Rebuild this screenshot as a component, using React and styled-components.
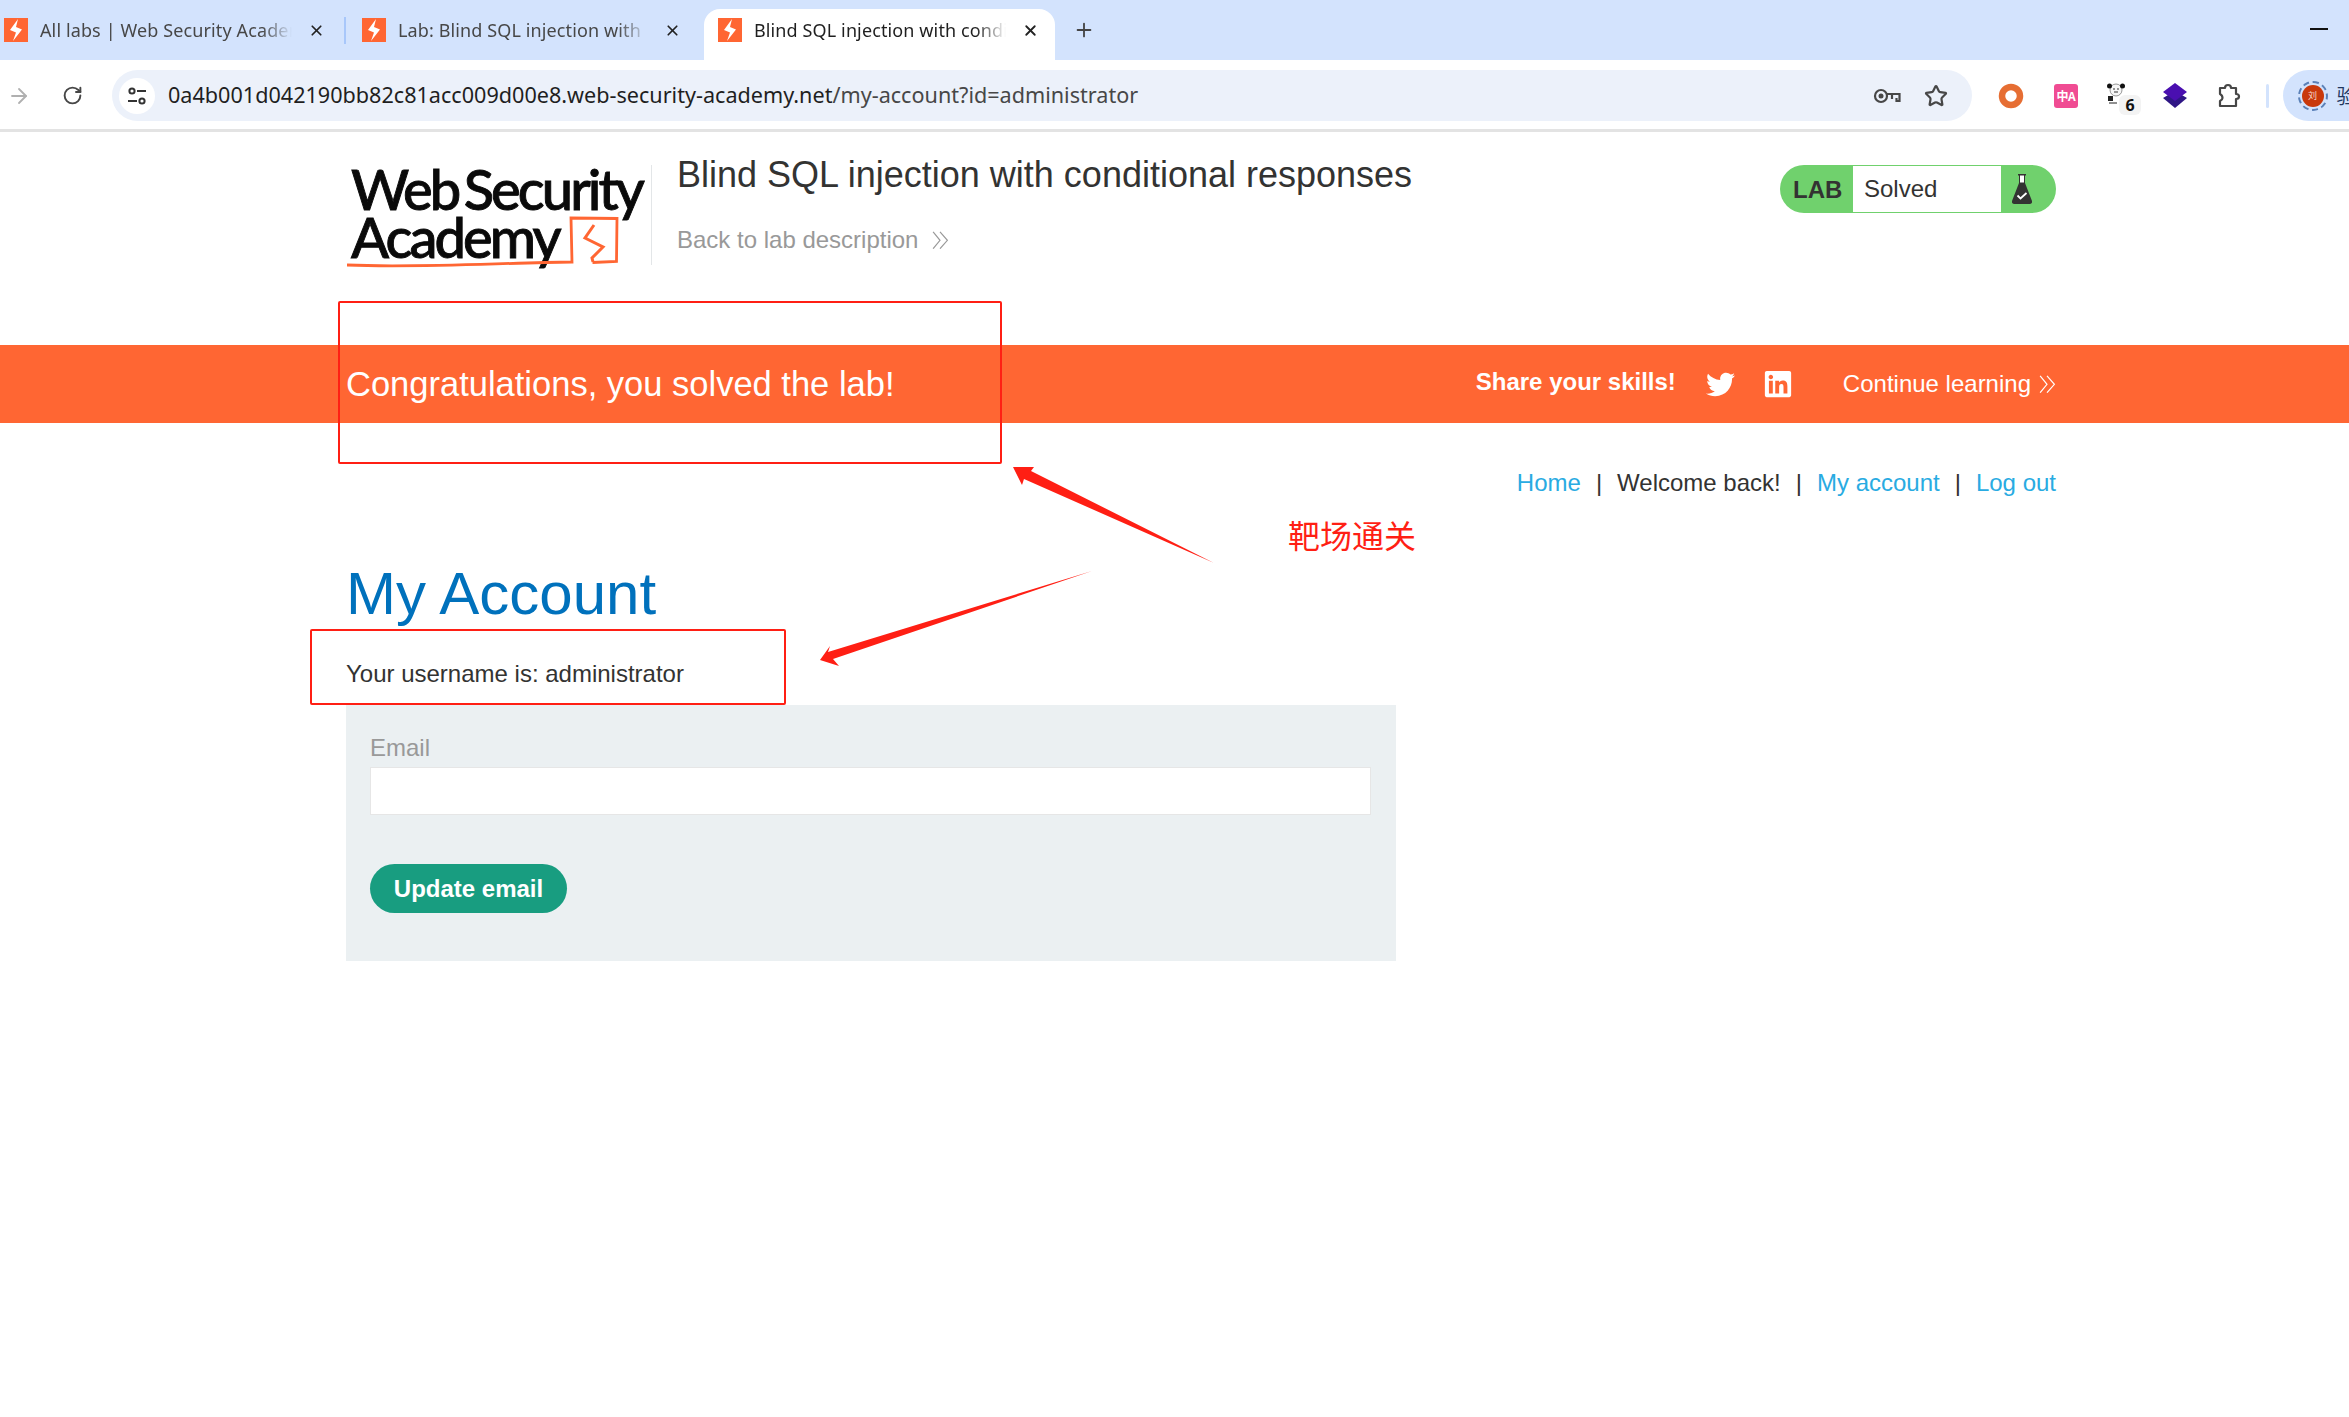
import styled, { createGlobalStyle } from "styled-components";
import { ArrowRight, RotateCw, Star, X, Plus } from "lucide-react";
import { FaTwitter, FaLinkedin } from "react-icons/fa";

const GlobalStyle = createGlobalStyle`
  html, body {
    margin: 0;
    padding: 0;
    background: #fff;
    overflow: hidden;
  }

  * {
    box-sizing: border-box;
  }
`;

const Page = styled.div`
  position: relative;
  width: 2349px;
  height: 1417px;
  overflow: hidden;
  font-family: "Liberation Sans", Arial, sans-serif;
  color: #333332;
`;

/* browser chrome */
const TabStrip = styled.div`
  display: flex;
  align-items: flex-end;
  height: 60px;
  background: #d3e3fd;
`;

const Tab = styled.div`
  display: flex;
  align-items: center;
  flex: none;
  width: ${(p) => p.$width}px;
  height: 51px;
  margin-left: ${(p) => p.$offset || 0}px;
  padding: 0 ${(p) => p.$right}px 9px ${(p) => p.$left}px;
  background: ${(p) => (p.$active ? "#fff" : "transparent")};
  border-radius: 16px 16px 0 0;
  font-family: "Noto Sans", sans-serif;
  font-size: 18px;
  letter-spacing: 0.12px;
  color: ${(p) => (p.$active ? "#1f1f1f" : "#474747")};
`;

const TabTitle = styled.span`
  flex: 1;
  min-width: 0;
  margin-left: 12px;
  overflow: hidden;
  white-space: nowrap;
  -webkit-mask-image: linear-gradient(to right, #000 88%, transparent 100%);
  mask-image: linear-gradient(to right, #000 88%, transparent 100%);
`;

const TabClose = styled(X)`
  flex: none;
  margin-left: 16px;
  color: #222;
`;

const TabDivider = styled.div`
  flex: none;
  width: 2px;
  height: 27px;
  margin-bottom: 16px;
  background: #a8c7fa;
`;

const NewTab = styled(Plus)`
  flex: none;
  align-self: center;
  margin-left: 18px;
  color: #444;
`;

const Minimize = styled.div`
  width: 18px;
  height: 2px;
  margin: 0 21px 30px auto;
  background: #111;
`;

const Toolbar = styled.div`
  display: flex;
  align-items: center;
  height: 72px;
  padding: 2px 0 0 5px;
  background: #fff;
  border-bottom: 3px solid #e3e3e3;
`;

const NavButton = styled.div`
  display: flex;
  align-items: center;
  justify-content: center;
  flex: none;
  width: ${(p) => p.$width}px;
  color: ${(p) => p.$color};
`;

const AddressBar = styled.div`
  display: flex;
  align-items: center;
  flex: none;
  width: 1860px;
  height: 51px;
  padding: 0 12px 0 7px;
  border-radius: 26px;
  background: #ecf1fa;
`;

const SiteInfo = styled.div`
  display: flex;
  align-items: center;
  justify-content: center;
  flex: none;
  width: 36px;
  height: 36px;
  border-radius: 50%;
  background: #fff;
`;

const Url = styled.div`
  flex: 1;
  margin: 0 0 3px 13px;
  font-family: "Noto Sans", sans-serif;
  font-size: 21.6px;
  color: #474747;
  white-space: nowrap;

  b {
    font-weight: 400;
    color: #1f1f1f;
  }
`;

const BarIcon = styled.div`
  display: flex;
  align-items: center;
  justify-content: center;
  flex: none;
  width: 49px;
  color: #474747;
`;

const Extensions = styled.div`
  display: flex;
  flex: none;
  margin-left: 12px;
`;

const Extension = styled.div`
  position: relative;
  display: flex;
  align-items: center;
  justify-content: center;
  width: 54.5px;
  height: 36px;
`;

const CountBadge = styled.span`
  position: absolute;
  left: 26px;
  top: 17px;
  width: 22px;
  height: 20px;
  border-radius: 6px;
  background: #f3f3f3;
  font-family: "Noto Sans", sans-serif;
  font-size: 16px;
  font-weight: 700;
  line-height: 20px;
  text-align: center;
  color: #111;
`;

const TranslateTile = styled.div`
  display: flex;
  align-items: center;
  justify-content: center;
  width: 24px;
  height: 24px;
  border-radius: 3px;
  background: #f04c93;
  color: #fff;
  font-family: "Noto Sans CJK SC", sans-serif;
  font-size: 12px;
  font-weight: 700;
  letter-spacing: -0.5px;
`;

const ToolbarRule = styled.div`
  flex: none;
  width: 3px;
  height: 24px;
  margin-left: 9px;
  border-radius: 2px;
  background: #d3e3fd;
`;

const Profile = styled.div`
  display: flex;
  align-items: center;
  flex: 1;
  height: 51px;
  margin-left: 14px;
  padding-left: 15px;
  border-radius: 26px 0 0 26px;
  background: #d3e3fd;
  font-family: "Noto Sans CJK SC", sans-serif;
  font-size: 20px;
  color: #1f3760;
  white-space: nowrap;
  overflow: hidden;
`;

const AvatarRing = styled.div`
  display: flex;
  align-items: center;
  justify-content: center;
  flex: none;
  width: 30px;
  height: 30px;
  margin-right: 9px;
  border: 2px dashed #5b81b8;
  border-radius: 50%;
`;

const Avatar = styled.div`
  width: 22px;
  height: 22px;
  border-radius: 50%;
  background: #c9390c;
  color: #f6d9cc;
  font-size: 9px;
  line-height: 22px;
  text-align: center;
`;

/* lab page */
const Content = styled.div`
  padding: 0 293px 0 346px;
`;

const Header = styled(Content)`
  display: flex;
  align-items: flex-start;
  height: 213px;
  padding-top: 33px;
`;

const Logo = styled.div`
  position: relative;
  flex: none;
  width: 306px;
  height: 100px;
  border-right: 1px solid #e3e6e8;
  font-family: Lato, sans-serif;
  font-weight: 500;
  font-size: 56px;
  line-height: 48px;
  letter-spacing: -2.9px;
  word-spacing: -6px;
  color: #0a0a0a;
  -webkit-text-stroke: 0.9px #0a0a0a;
  white-space: nowrap;
`;

const LogoLine = styled.div`
  margin-left: 5px;
`;

const LogoMark = styled.svg`
  position: absolute;
  left: 0;
  top: 50px;
  width: 280px;
  height: 70px;
`;

const LabTitle = styled.div`
  flex: 1;
  margin-left: 25px;
  margin-top: -15px;
`;

const LabHeading = styled.h2`
  margin: 0;
  font-size: 36px;
  font-weight: 400;
  line-height: 50px;
  color: #333332;
`;

const BackLink = styled.div`
  display: flex;
  align-items: center;
  margin-top: 22px;
  font-size: 24px;
  line-height: 36px;
  color: #999;
`;

const Chevrons = styled.svg`
  flex: none;
  margin-left: ${(p) => p.$gap}px;
`;

const StatusPill = styled.div`
  display: flex;
  align-items: stretch;
  flex: none;
  width: 276px;
  height: 48px;
  border-radius: 24px;
  background: #70d16d;
`;

const StatusLab = styled.div`
  width: 73px;
  padding-left: 13px;
  font-size: 24px;
  font-weight: 700;
  line-height: 50px;
`;

const StatusValue = styled.div`
  width: 148px;
  margin: 1px 0;
  padding-left: 11px;
  background: #fff;
  font-size: 24px;
  line-height: 46px;
`;

const StatusIcon = styled.div`
  display: flex;
  align-items: center;
  padding-left: 11px;
`;

const Banner = styled(Content)`
  display: flex;
  align-items: center;
  height: 78px;
  background: #ff6633;
  color: #fff;
`;

const BannerTitle = styled.h4`
  flex: 1;
  margin: 0;
  font-size: 34.5px;
  font-weight: 400;
`;

const ShareLabel = styled.span`
  margin-bottom: 4px;
  font-size: 24px;
  font-weight: 700;
`;

const ShareIcon = styled.span`
  display: flex;
  margin-left: ${(p) => p.$gap}px;
`;

const ContinueLink = styled.span`
  margin-left: 50px;
  font-size: 24px;
`;

const TopLinks = styled(Content)`
  display: flex;
  justify-content: flex-end;
  margin-top: 42px;
  font-size: 24px;
  line-height: 36px;
`;

const TopLink = styled.span`
  color: #29abe2;
`;

const Pipe = styled.span`
  margin: 0 15px;
`;

const AccountHeading = styled.h1`
  margin: 57px 0 0;
  font-size: 60px;
  font-weight: 400;
  line-height: 72px;
  color: #0071bc;
`;

const UserLine = styled.p`
  margin: 26px 0 13px;
  font-size: 24px;
  line-height: 36px;
`;

const EmailForm = styled.form`
  width: 1050px;
  height: 256px;
  padding: 25px 24px 0;
  background: #ebf0f2;
`;

const FieldLabel = styled.label`
  display: block;
  font-size: 24px;
  line-height: 36px;
  color: #999;
`;

const EmailInput = styled.input`
  display: block;
  width: 1001px;
  height: 48px;
  margin-top: 1px;
  border: 1px solid #e6e6e6;
  border-radius: 0;
  background: #fff;
`;

const UpdateButton = styled.button`
  display: block;
  width: 197px;
  height: 49px;
  margin-top: 49px;
  padding: 0;
  border: 0;
  border-radius: 25px;
  background: #189d80;
  color: #fff;
  font-family: "Liberation Sans", Arial, sans-serif;
  font-size: 24px;
  font-weight: 700;
`;

/* red markup drawn on top of the screenshot */
const Markup = styled.svg`
  position: absolute;
  left: 0;
  top: 0;
  pointer-events: none;
`;

const MarkupNote = styled.div`
  position: absolute;
  left: 1288px;
  top: 511px;
  font-family: "Noto Sans CJK SC", sans-serif;
  font-size: 32px;
  line-height: 46px;
  color: #ff1f14;
`;

function Favicon() {
  return (
    <svg width="24" height="24" viewBox="0 0 24 24" style={{ flex: "none" }}>
      <rect width="24" height="24" fill="#ff6633" />
      <path d="M14 1 6 12l6 2.500L9 23l9-11.500-6-2.500z" fill="#fff" />
    </svg>
  );
}

function DoubleChevron({ gap, size = 17, color }) {
  return (
    <Chevrons $gap={gap} width={size} height={size * 1.1} viewBox="0 0 17 19">
      <path
        d="M1 1l7 8.500L1 18M8 1l7.500 8.500L8 18"
        fill="none"
        stroke={color}
        strokeWidth="1.2"
      />
    </Chevrons>
  );
}

function App() {
  return (
    <Page>
      <GlobalStyle />
      <TabStrip>
        <Tab $width={344} $left={4} $right={19}>
          <Favicon />
          <TabTitle>All labs | Web Security Academy</TabTitle>
          <TabClose size={17} strokeWidth={2.4} />
        </Tab>
        <TabDivider />
        <Tab $width={344} $left={16} $right={9}>
          <Favicon />
          <TabTitle>Lab: Blind SQL injection with</TabTitle>
          <TabClose size={17} strokeWidth={2.4} />
        </Tab>
        <Tab $active $width={351} $offset={14} $left={14} $right={16}>
          <Favicon />
          <TabTitle>Blind SQL injection with conditional</TabTitle>
          <TabClose size={17} strokeWidth={2.6} />
        </Tab>
        <NewTab size={22} strokeWidth={2} />
        <Minimize />
      </TabStrip>

      <Toolbar>
        <NavButton $width={28} $color="#b0b0b0">
          <ArrowRight size={24} strokeWidth={1.8} />
        </NavButton>
        <NavButton $width={79} $color="#474747">
          <RotateCw size={21} strokeWidth={2.2} />
        </NavButton>
        <AddressBar>
          <SiteInfo>
            <svg width="20" height="20" viewBox="0 0 20 20">
              <g fill="none" stroke="#333" strokeWidth="2">
                <circle cx="5" cy="5" r="2.600" />
                <circle cx="15" cy="15" r="2.600" />
                <path d="M10 5h9M1 15h9" />
              </g>
            </svg>
          </SiteInfo>
          <Url>
            <b>0a4b001d042190bb82c81acc009d00e8.web-security-academy.net</b>
            /my-account?id=administrator
          </Url>
          <BarIcon>
            <svg width="28" height="16" viewBox="0 0 28 16">
              <g fill="none" stroke="#474747" strokeWidth="2.2">
                <circle cx="8" cy="8" r="6" />
                <path d="M14 6h12.500v7h-3v-3M19 7v4" />
              </g>
              <circle cx="8" cy="8" r="2.500" fill="#474747" />
            </svg>
          </BarIcon>
          <BarIcon>
            <Star size={24} strokeWidth={2.2} />
          </BarIcon>
        </AddressBar>
        <Extensions>
          <Extension>
            <svg width="26" height="26" viewBox="0 0 26 26">
              <circle cx="13" cy="13" r="9" fill="none" stroke="#e66e33" strokeWidth="6.500" />
            </svg>
          </Extension>
          <Extension>
            <TranslateTile>中A</TranslateTile>
          </Extension>
          <Extension>
            <svg width="18" height="22" viewBox="0 0 18 22" style={{ margin: "-4px 8px 0 0" }}>
              <circle cx="9" cy="7" r="6" fill="#f6f6f6" stroke="#555" strokeWidth="0.6" />
              <circle cx="2.500" cy="3" r="2.500" fill="#111" />
              <circle cx="15.500" cy="3" r="2.500" fill="#111" />
              <path d="M1 13h5v5H1zM2 19.500h8v1H2z" fill="#222" />
              <path d="M6 6h2M10 6h2M7 9h4" stroke="#333" strokeWidth="1" />
            </svg>
            <CountBadge>6</CountBadge>
          </Extension>
          <Extension>
            <svg width="24" height="25" viewBox="0 0 24 25">
              <path d="M12 8 24 15 12 25 0 15z" fill="#2f1685" />
              <path d="M12 0 24 9 12 18 0 9z" fill="#4a0fb0" />
            </svg>
          </Extension>
          <Extension>
            <svg width="24" height="26" viewBox="0 0 24 26">
              <path
                d="M3 5h5c0-2 1-3 3-3s3 1 3 3h5v6c2 0 3 1 3 2.500s-1 2.500-3 2.500v7H3v-5c2-1 2.500-2 2.500-3S5 12 3 11z"
                fill="none"
                stroke="#474747"
                strokeWidth="2.2"
                strokeLinejoin="round"
              />
            </svg>
          </Extension>
        </Extensions>
        <ToolbarRule />
        <Profile>
          <AvatarRing>
            <Avatar>刘</Avatar>
          </AvatarRing>
          验证
        </Profile>
      </Toolbar>

      <Header>
        <Logo>
          <LogoLine>Web Security</LogoLine>
          <LogoLine>Academy</LogoLine>
          <LogoMark viewBox="0 0 280 70">
            <path
              d="M1 50c70 3 150-2 225-3l-1-44 46 .5-.5 43-24 1"
              fill="none"
              stroke="#ff6633"
              strokeWidth="2.800"
            />
            <path
              d="M248 10l-9 13 18 9-11 11 1 4"
              fill="none"
              stroke="#ff6633"
              strokeWidth="3"
            />
          </LogoMark>
        </Logo>
        <LabTitle>
          <LabHeading>Blind SQL injection with conditional responses</LabHeading>
          <BackLink>
            Back to lab description
            <DoubleChevron gap={14} color="#999" />
          </BackLink>
        </LabTitle>
        <StatusPill>
          <StatusLab>LAB</StatusLab>
          <StatusValue>Solved</StatusValue>
          <StatusIcon>
            <svg width="20" height="30" viewBox="0 0 20 30">
              <path d="M6 0h8v1.500h-1V9L20 27c.5 1.500-.5 3-2 3H2c-1.500 0-2.500-1.500-2-3L7 9V1.500H6z" fill="#333332" />
              <rect x="8" y="1.500" width="4" height="7" fill="#fff" />
              <path d="M5.500 21.500l3 3 6-5.500" fill="none" stroke="#fff" strokeWidth="1.800" />
            </svg>
          </StatusIcon>
        </StatusPill>
      </Header>

      <Banner>
        <BannerTitle>Congratulations, you solved the lab!</BannerTitle>
        <ShareLabel>Share your skills!</ShareLabel>
        <ShareIcon $gap={30}>
          <FaTwitter size={29} />
        </ShareIcon>
        <ShareIcon $gap={28}>
          <FaLinkedin size={30} />
        </ShareIcon>
        <ContinueLink>Continue learning</ContinueLink>
        <DoubleChevron gap={8} color="#fff" />
      </Banner>

      <TopLinks>
        <TopLink>Home</TopLink>
        <Pipe>|</Pipe>
        <span>Welcome back!</span>
        <Pipe>|</Pipe>
        <TopLink>My account</TopLink>
        <Pipe>|</Pipe>
        <TopLink>Log out</TopLink>
      </TopLinks>

      <Content>
        <AccountHeading>My Account</AccountHeading>
        <UserLine>Your username is: administrator</UserLine>
        <EmailForm>
          <FieldLabel>Email</FieldLabel>
          <EmailInput type="email" name="email" />
          <UpdateButton type="button">Update email</UpdateButton>
        </EmailForm>
      </Content>

      <Markup width="2349" height="1417" viewBox="0 0 2349 1417">
        <g fill="none" stroke="#ff1f14" strokeWidth="2">
          <rect x="339" y="302" width="662" height="161" rx="1" />
          <rect x="311" y="630" width="474" height="74" rx="1" />
        </g>
        <g fill="#ff1f14">
          <polygon points="1013,467 1034,467 1031,471 1214,563 1024,479 1022,485" />
          <polygon points="820,660 830,646 828,652 1092,571 833,659 839,666" />
        </g>
      </Markup>
      <MarkupNote>靶场通关</MarkupNote>
    </Page>
  );
}

export default App;
